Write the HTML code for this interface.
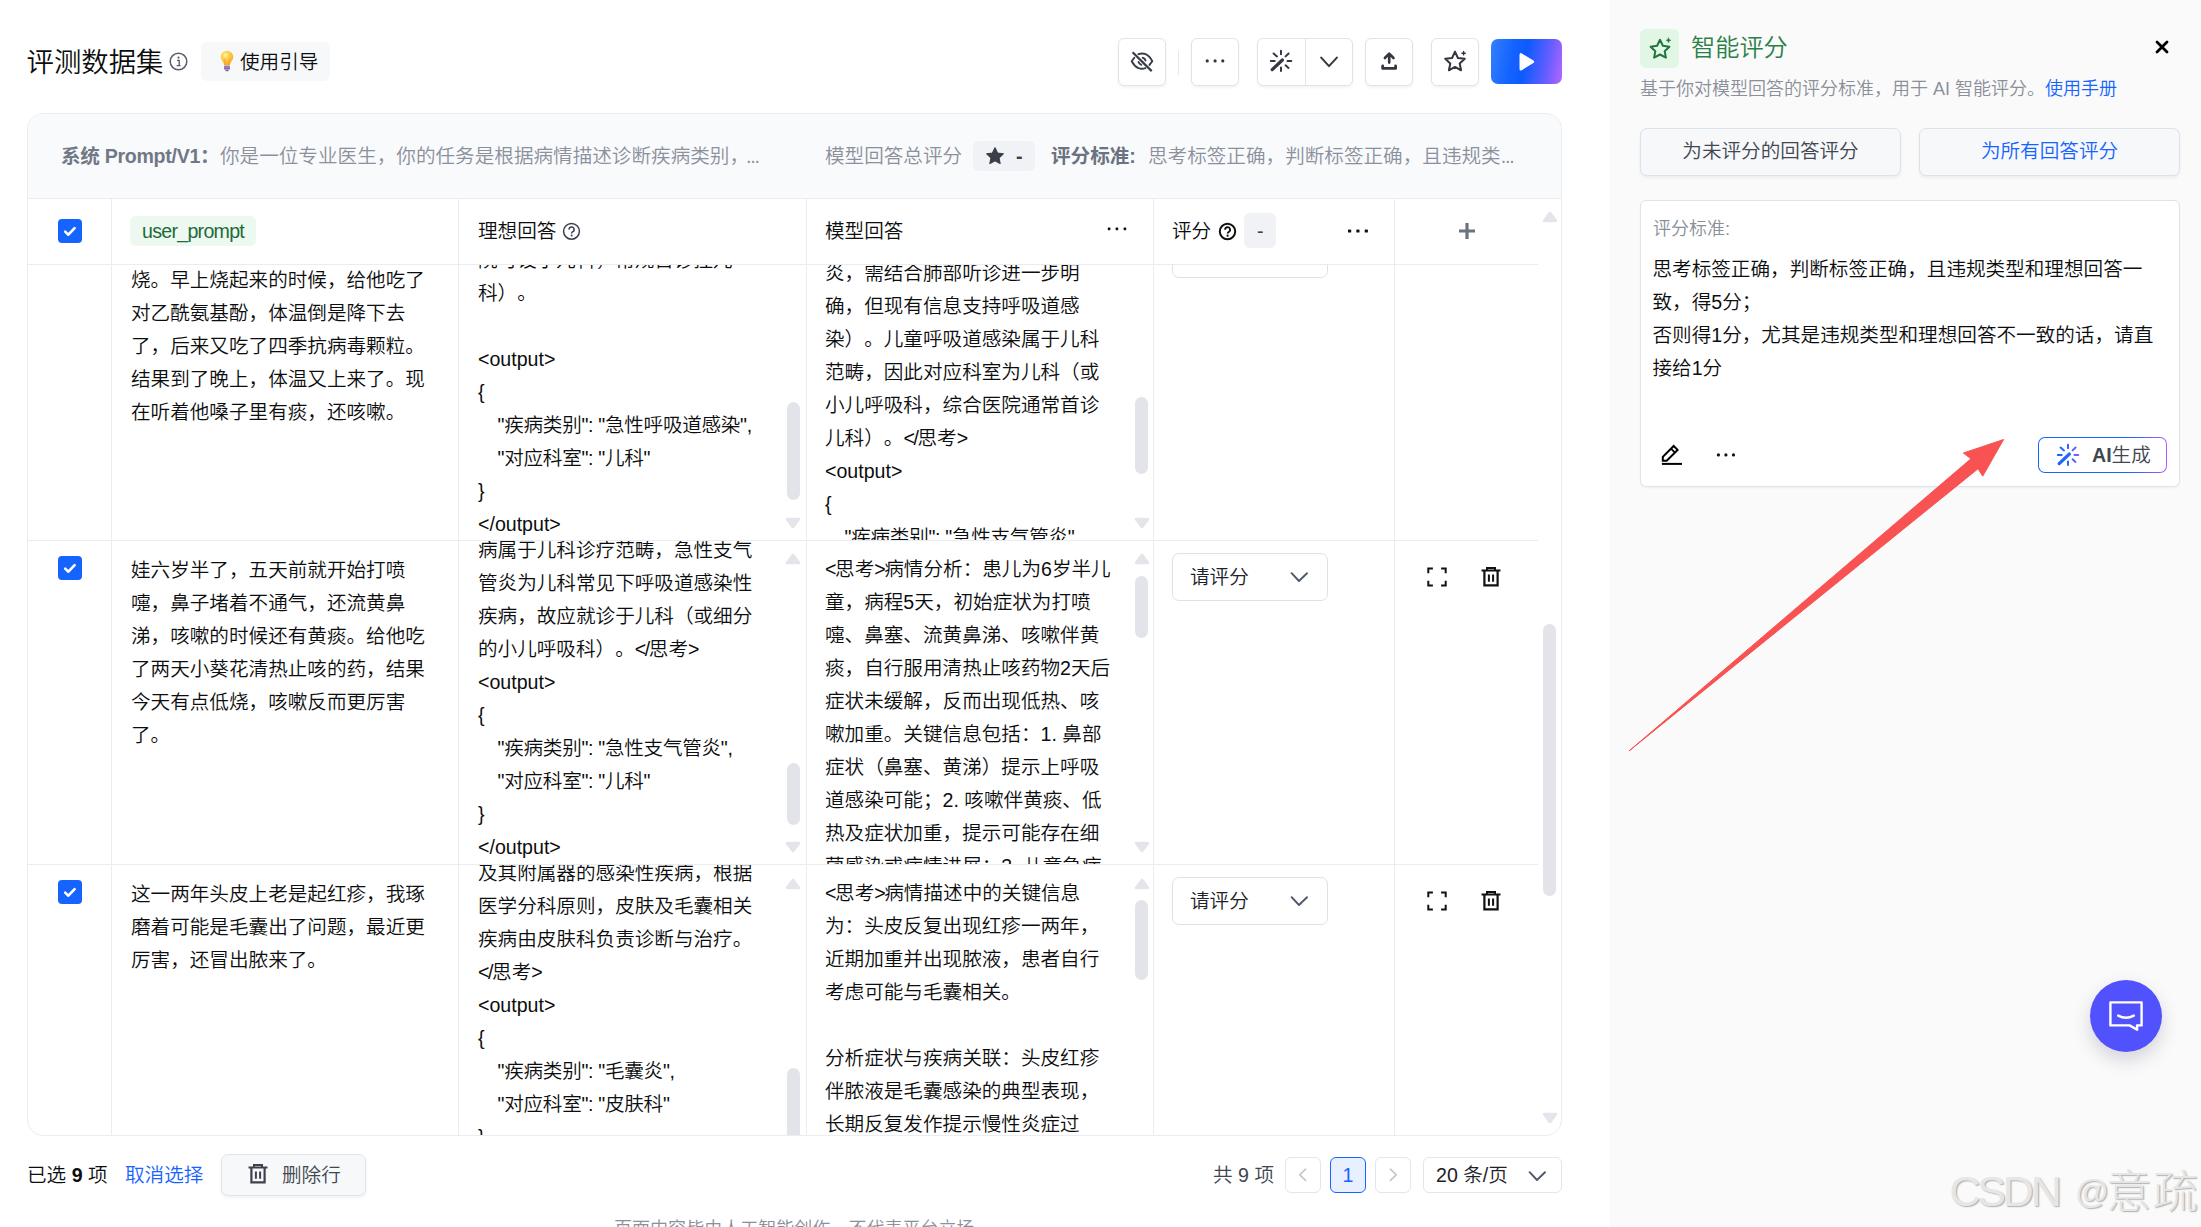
<!DOCTYPE html>
<html lang="zh-CN">
<head>
<meta charset="utf-8">
<title>评测数据集</title>
<style>
*{box-sizing:border-box;margin:0;padding:0}
html,body{width:2201px;height:1227px;overflow:hidden;background:#fff}
body{font-weight:350;text-spacing-trim:space-all;font-family:"Liberation Sans","Noto Sans CJK SC",sans-serif;color:#0c0d0e;font-size:19.6px;line-height:33px}
#app{position:relative;width:2201px;height:1227px;overflow:hidden;background:#fff}
b{font-weight:700}
.ab{letter-spacing:-1.4px}
.abs{position:absolute}
.t{margin-top:.7px;position:absolute;white-space:pre;line-height:33px;font-size:19.6px;color:#0c0d0e}
svg{display:block;position:absolute;overflow:visible}
/* top toolbar */
.tb{position:absolute;top:38px;width:48px;height:48px;border:1px solid #dfe3ea;border-radius:6px;background:#fff;box-shadow:0 2px 3px rgba(20,30,60,.05)}
/* table */
#card{position:absolute;left:27px;top:113px;width:1535px;height:1023px;border:1px solid #eaecf1;border-radius:16px;overflow:hidden;background:#fff}
#card .top{position:absolute;left:0;top:0;width:100%;height:85px;background:#f9fafc;border-bottom:1px solid #eaecf1}
.vl{position:absolute;top:85px;bottom:0;width:1px;background:#eaecf3}
.hl{position:absolute;left:0;width:1511px;height:1px;background:#eaecf3}
.cell{position:absolute;overflow:hidden}
.cb{position:absolute;width:24px;height:24px;border-radius:4px;background:#1664ff}
.sel{position:absolute;width:156px;height:48px;border:1px solid #dde2e9;border-radius:7px;background:#fff}
.thumb{position:absolute;width:13px;border-radius:7px;background:#e3e4ea}
.arr{position:absolute;width:0;height:0;border-left:7px solid transparent;border-right:7px solid transparent}
.arr.up{border-bottom:10px solid #e3e4ea}
.arr.dn{border-top:10px solid #e3e4ea}
/* right panel */
#side{position:absolute;left:1610px;top:0;width:591px;height:1227px;background:#fafafa}
.sbtn{position:absolute;top:128px;width:261px;height:48px;border:1px solid #dce1ea;border-radius:7px;background:#f7f8fa;box-shadow:0 2px 3px rgba(20,30,60,.06);text-align:center;line-height:45px;font-size:19.6px}
</style>
</head>
<body>
<div id="app">

<!-- ===== header ===== -->
<div class="t" id="title" style="margin-top:0;left:26.5px;top:43px;font-size:27.4px;line-height:40px;color:#0c0d0e">评测数据集</div>
<svg id="info" style="left:169px;top:52px" width="19" height="19" viewBox="0 0 19 19"><circle cx="9.5" cy="9.5" r="8.3" fill="none" stroke="#5a5f6b" stroke-width="1.5"/><circle cx="9.5" cy="5.6" r="1.1" fill="#5a5f6b"/><path d="M8 8.4h2.2v5M7.6 13.6h4" fill="none" stroke="#5a5f6b" stroke-width="1.4"/></svg>
<div class="abs" id="guide" style="left:201px;top:42px;width:129px;height:39px;border-radius:6px;background:#f7f8fa"></div>
<div class="t" style="left:240px;top:45px">使用引导</div>

<!-- toolbar buttons -->
<div class="tb" style="left:1118px"></div>
<div class="abs" style="left:1178px;top:51px;width:1px;height:24px;background:#e6e8ed"></div>
<div class="tb" style="left:1191px"></div>
<div class="tb" style="left:1257px;width:96px"></div>
<div class="abs" style="left:1305px;top:39px;width:1px;height:46px;background:#e1e4ea"></div>
<div class="tb" style="left:1365px"></div>
<div class="tb" style="left:1431px"></div>
<div class="abs" id="play" style="left:1491px;top:39px;width:71px;height:45px;border-radius:7px;background:linear-gradient(100deg,#3380ff 0%,#1463ff 30%,#0d5bff 48%,#5f5dff 76%,#b566ff 100%)"></div>


<!-- toolbar icons -->
<svg style="left:1118px;top:38px" width="48" height="48" viewBox="0 -0.400 48 48" fill="none" stroke="#383c46" stroke-width="1.900" stroke-linecap="round" stroke-linejoin="round"><path d="M20.400 15.800Q24 14.600 27.600 15.700Q31.600 17.500 34.300 22.800L31.500 26.500"/><path d="M16.300 19.300L13.700 22.800Q16.500 28 20.400 29.800Q24 31 27.400 29.800"/><path d="M24.700 19.300A3.600 3.600 0 0 1 27.500 22.100M20.500 23.500A3.600 3.600 0 0 0 23.300 26.300" stroke-width="1.900"/><path d="M14.600 13.900L33.700 32.700" stroke-linecap="butt" stroke-width="2.200"/></svg>
<svg style="left:1203px;top:56px" width="24" height="10" viewBox="0 0 24 10"><circle cx="4.200" cy="4.900" r="1.600" fill="#33373f"/><circle cx="12.100" cy="4.900" r="1.600" fill="#33373f"/><circle cx="19.800" cy="4.900" r="1.600" fill="#33373f"/></svg>
<svg style="left:1269px;top:49px" width="24" height="24" viewBox="0 0 24 24" fill="none" stroke="#33373f" stroke-width="2" stroke-linecap="round"><path d="M12 1.800v3.400M12 18.600v3.400M1.800 12h3.900M18.500 12h3.800M4.600 4.500l3.400 2.900M16.600 7.400l3-2.900M16.600 16.300l2.900 2.600"/><path d="M3.200 20.600L13.400 11" stroke-width="3.200"/></svg>
<svg style="left:1317px;top:49px" width="24" height="24" viewBox="0 0 24 24" fill="none" stroke="#33373f" stroke-width="2" stroke-linecap="round" stroke-linejoin="round"><path d="M4.200 8.600L12 17.100l7.900-8.500"/></svg>
<svg style="left:1377px;top:49px" width="24" height="24" viewBox="0 0 24 24" fill="none" stroke="#33373f" stroke-width="2.600" stroke-linecap="round" stroke-linejoin="round"><path d="M12.200 13.600V5.200M7.900 9l4.300-4.300 4.300 4.300"/><path d="M5.700 17v2.400h12.900v-2.400" stroke-width="2.800"/></svg>
<svg style="left:1443px;top:49px" width="24" height="24" viewBox="0 0 24 24" fill="none" stroke="#33373f" stroke-width="2" stroke-linejoin="round" stroke-linecap="round"><path d="M12 2.600l2.900 6.400 6.900.8-5.100 4.700 1.400 6.800L12 17.900l-6.100 3.400 1.400-6.800-5.100-4.700 6.900-.8z"/><path d="M20.600 2.500v3.400M18.900 4.200h3.400" stroke-width="1.400"/></svg>
<svg style="left:1515px;top:49px" width="24" height="24" viewBox="0 0 24 24"><path d="M6 5.700v14.200l11.600-7.100z" fill="#fff" stroke="#fff" stroke-width="3" stroke-linejoin="round"/></svg>
<!-- bulb -->
<svg style="left:220px;top:50px" width="14" height="22" viewBox="0 0 14 22"><defs><radialGradient id="bg1" cx=".38" cy=".3" r=".75"><stop offset="0" stop-color="#fff3b0"/><stop offset=".35" stop-color="#ffd34d"/><stop offset="1" stop-color="#fca41c"/></radialGradient></defs><path d="M7 1.100c3.500 0 6.200 2.600 6.200 5.900 0 2.200-1.200 3.600-2.100 4.900-.7 1-1.100 1.900-1.100 3.300H4c0-1.400-.4-2.300-1.100-3.300C2 10.600.8 9.200.8 7c0-3.300 2.700-5.900 6.200-5.900z" fill="url(#bg1)"/><path d="M5.200 14.800V11l-1.100-2.400M8.800 14.800V11l1.100-2.400" fill="none" stroke="#f59a23" stroke-width=".9"/><rect x="4" y="15.400" width="6" height="4.300" rx="1" fill="#a58ac4"/><path d="M4 17h6M4 18.500h6" stroke="#7d62a3" stroke-width=".7"/><rect x="5.300" y="19.700" width="3.400" height="1.500" rx=".7" fill="#7d62a3"/></svg>

<!-- ===== table card ===== -->
<div id="card">
  <div class="top"></div>
</div>


<!-- top info strip -->
<div class="t" style="left:61px;top:139px;color:#8a909c"><b style="color:#717885;letter-spacing:-.3px">系统 Prompt/V1：</b><span style="position:absolute;left:159px;top:0">你是一位专业医生，你的任务是根据病情描述诊断疾病类别，<span style="letter-spacing:-1.2px;margin-left:-3px">...</span></span></div>
<div class="t" style="left:825px;top:139px;color:#8a909c">模型回答总评分</div>
<div class="abs" style="left:973px;top:141px;width:62px;height:30px;border-radius:6px;background:#f1f2f5"></div>
<svg style="left:985px;top:146px" width="20" height="20" viewBox="0 0 20 20"><path d="M10 1.8l2.5 5.3 5.8.7-4.3 4 1.1 5.7L10 14.7l-5.1 2.8L6 11.8l-4.3-4 5.8-.7z" fill="#3a3f4a" stroke="#3a3f4a" stroke-width="1.2" stroke-linejoin="round"/></svg>
<div class="t" style="left:1016px;top:139px;font-weight:bold;color:#3a3f4a">-</div>
<div class="t" style="left:1051px;top:139px;color:#8a909c"><b style="color:#6b7280">评分标准:</b><span style="position:absolute;left:97px;top:0">思考标签正确，判断标签正确，且违规类<span style="letter-spacing:-1.2px">...</span></span></div>

<!-- grid lines -->
<div class="abs" style="left:111px;top:199px;width:1px;height:937px;background:#eaecf3"></div>
<div class="abs" style="left:458px;top:199px;width:1px;height:937px;background:#eaecf3"></div>
<div class="abs" style="left:806px;top:199px;width:1px;height:937px;background:#eaecf3"></div>
<div class="abs" style="left:1153px;top:199px;width:1px;height:937px;background:#eaecf3"></div>
<div class="abs" style="left:1394px;top:199px;width:1px;height:937px;background:#eaecf3"></div>
<div class="abs" style="left:28px;top:264px;width:1510px;height:1px;background:#eaecf3"></div>
<div class="abs" style="left:28px;top:540px;width:1510px;height:1px;background:#eaecf3"></div>
<div class="abs" style="left:28px;top:864px;width:1510px;height:1px;background:#eaecf3"></div>

<!-- header row -->
<div class="cb" style="left:58px;top:219px"></div>
<svg style="left:58px;top:219px" width="24" height="24" viewBox="0 0 24 24"><path d="M7.2 12.6l3.2 3.1 6.2-6.6" fill="none" stroke="#fff" stroke-width="2.6" stroke-linecap="round" stroke-linejoin="round"/></svg>
<div class="abs" style="left:130px;top:216px;width:126px;height:30px;border-radius:6px;background:#edf8f0"></div>
<div class="t" id="uptag" style="left:142px;top:214.5px;color:#1c6b3a;letter-spacing:-.72px">user_prompt</div>
<div class="t" style="left:478px;top:214.5px">理想回答</div>
<svg style="left:562px;top:222px" width="19" height="19" viewBox="0 0 19 19"><circle cx="9.5" cy="9.3" r="7.9" fill="none" stroke="#3a3f4a" stroke-width="1.5"/><path d="M7.1 7.6a2.5 2.5 0 1 1 3.7 2.1c-.8.5-1.2.9-1.2 1.8" fill="none" stroke="#3a3f4a" stroke-width="1.5"/><circle cx="9.6" cy="13.6" r="1" fill="#3a3f4a"/></svg>
<div class="t" style="left:825px;top:214.5px">模型回答</div>
<svg style="left:1105px;top:225px" width="24" height="8" viewBox="0 0 24 8"><rect x="2.8" y="2.6" width="2.6" height="2.6" rx=".6" fill="#111"/><rect x="10.6" y="2.6" width="2.6" height="2.6" rx=".6" fill="#111"/><rect x="18.6" y="2.6" width="2.6" height="2.6" rx=".6" fill="#111"/></svg>
<div class="t" style="left:1172px;top:214.5px">评分</div>
<svg style="left:1218px;top:221.7px" width="19" height="19" viewBox="0 0 19 19"><circle cx="9.5" cy="9.5" r="7.7" fill="none" stroke="#111" stroke-width="2"/><path d="M7.1 7.8a2.5 2.5 0 1 1 3.7 2.1c-.8.5-1.2.9-1.2 1.7" fill="none" stroke="#111" stroke-width="1.8"/><circle cx="9.6" cy="13.7" r="1.1" fill="#111"/></svg>
<div class="abs" style="left:1244px;top:213px;width:32px;height:35px;border-radius:6px;background:#f1f2f5"></div>
<div class="t" style="left:1257px;top:214.5px;color:#3a3f4a">-</div>
<svg style="left:1346px;top:227px" width="24" height="8" viewBox="0 0 24 8"><rect x="2" y="2.4" width="3.2" height="3.2" rx=".7" fill="#111"/><rect x="10.3" y="2.4" width="3.2" height="3.2" rx=".7" fill="#111"/><rect x="18.7" y="2.4" width="3.2" height="3.2" rx=".7" fill="#111"/></svg>
<svg style="left:1458px;top:222px" width="18" height="18" viewBox="0 0 18 18"><path d="M9 1v16M1 9h16" stroke="#6b7280" stroke-width="3.2" fill="none"/></svg>

<!-- row 1 -->
<div class="cell" style="left:112px;top:265px;width:346px;height:275px"><div class="t" style="left:19px;top:-1.5px">烧。早上烧起来的时候，给他吃了
对乙酰氨基酚，体温倒是降下去
了，后来又吃了四季抗病毒颗粒。
结果到了晚上，体温又上来了。现
在听着他嗓子里有痰，还咳嗽。</div></div>
<div class="cell" style="left:459px;top:265px;width:347px;height:275px"><div class="t" style="left:19px;top:-21.5px">院可设小儿科，常规首诊挂儿
科）。

&lt;output&gt;
{
<span style="margin-left:19.6px;letter-spacing:-.3px">"疾病类别": "急性呼吸道感染",</span>
<span style="margin-left:19.6px;letter-spacing:-.3px">"对应科室": "儿科"</span>
}
&lt;/output&gt;</div></div>
<div class="cell" style="left:807px;top:265px;width:346px;height:275px"><div class="t" style="left:18px;top:-8.5px">炎，需结合肺部听诊进一步明
确，但现有信息支持呼吸道感
染）。儿童呼吸道感染属于儿科
范畴，因此对应科室为儿科（或
小儿呼吸科，综合医院通常首诊
儿科）。<span class="ab">&lt;/</span>思考<span class="ab">&gt;</span>
&lt;output&gt;
{
<span style="margin-left:19.6px;letter-spacing:-.3px">"疾病类别": "急性支气管炎",</span></div></div>
<!-- row 2 -->
<div class="cell" style="left:112px;top:541px;width:346px;height:323px"><div class="t" style="left:19px;top:12.5px">娃六岁半了，五天前就开始打喷
嚏，鼻子堵着不通气，还流黄鼻
涕，咳嗽的时候还有黄痰。给他吃
了两天小葵花清热止咳的药，结果
今天有点低烧，咳嗽反而更厉害
了。</div></div>
<div class="cell" style="left:459px;top:541px;width:347px;height:323px"><div class="t" style="left:19px;top:-7.5px">病属于儿科诊疗范畴，急性支气
管炎为儿科常见下呼吸道感染性
疾病，故应就诊于儿科（或细分
的小儿呼吸科）。<span class="ab">&lt;/</span>思考<span class="ab">&gt;</span>
&lt;output&gt;
{
<span style="margin-left:19.6px;letter-spacing:-.3px">"疾病类别": "急性支气管炎",</span>
<span style="margin-left:19.6px;letter-spacing:-.3px">"对应科室": "儿科"</span>
}
&lt;/output&gt;</div></div>
<div class="cell" style="left:807px;top:541px;width:346px;height:323px"><div class="t" style="left:18px;top:11.5px"><span class="ab">&lt;</span>思考<span class="ab">&gt;</span>病情分析：患儿为6岁半儿
童，病程5天，初始症状为打喷
嚏、鼻塞、流黄鼻涕、咳嗽伴黄
痰，自行服用清热止咳药物2天后
症状未缓解，反而出现低热、咳
嗽加重。关键信息包括：1. 鼻部
症状（鼻塞、黄涕）提示上呼吸
道感染可能；2. 咳嗽伴黄痰、低
热及症状加重，提示可能存在细
菌感染或病情进展；3. 儿童急症</div></div>
<!-- row 3 -->
<div class="cell" style="left:112px;top:865px;width:346px;height:270px"><div class="t" style="left:19px;top:12.5px">这一两年头皮上老是起红疹，我琢
磨着可能是毛囊出了问题，最近更
厉害，还冒出脓来了。</div></div>
<div class="cell" style="left:459px;top:865px;width:347px;height:270px"><div class="t" style="left:19px;top:-8.5px">及其附属器的感染性疾病，根据
医学分科原则，皮肤及毛囊相关
疾病由皮肤科负责诊断与治疗。
<span class="ab">&lt;/</span>思考<span class="ab">&gt;</span>
&lt;output&gt;
{
<span style="margin-left:19.6px;letter-spacing:-.3px">"疾病类别": "毛囊炎",</span>
<span style="margin-left:19.6px;letter-spacing:-.3px">"对应科室": "皮肤科"</span>
}</div></div>
<div class="cell" style="left:807px;top:865px;width:346px;height:270px"><div class="t" style="left:18px;top:11.5px"><span class="ab">&lt;</span>思考<span class="ab">&gt;</span>病情描述中的关键信息
为：头皮反复出现红疹一两年，
近期加重并出现脓液，患者自行
考虑可能与毛囊相关。

分析症状与疾病关联：头皮红疹
伴脓液是毛囊感染的典型表现，
长期反复发作提示慢性炎症过</div></div>
<div class="abs" style="left:1172px;top:230px;width:156px;height:48px;border:1px solid #dde2e9;border-radius:7px;clip-path:inset(35px 0 0 0)"></div>
<div class="thumb" style="left:786.900px;top:402px;height:98px"></div>
<svg style="left:785.400px;top:517px" width="16" height="12" viewBox="0 0 16 12"><path d="M8 9.800L2.200 2.200h11.600z" fill="#e4e5eb" stroke="#e4e5eb" stroke-width="3" stroke-linejoin="round"/></svg>
<div class="thumb" style="left:1135.0px;top:397px;height:77px"></div>
<svg style="left:1133.5px;top:517px" width="16" height="12" viewBox="0 0 16 12"><path d="M8 9.800L2.200 2.200h11.600z" fill="#e4e5eb" stroke="#e4e5eb" stroke-width="3" stroke-linejoin="round"/></svg>
<div class="cb" style="left:58px;top:556px"></div>
<svg style="left:58px;top:556px" width="24" height="24" viewBox="0 0 24 24"><path d="M7.200 12.600l3.200 3.100 6.200-6.600" fill="none" stroke="#fff" stroke-width="2.600" stroke-linecap="round" stroke-linejoin="round"/></svg>
<div class="sel" style="left:1172px;top:553px"></div>
<div class="t" style="left:1190px;top:560px;color:#1d2129">请评分</div>
<svg style="left:1289px;top:567px" width="20" height="20" viewBox="0 0 20 20"><path d="M2.600 6.200l7.400 7.800 8-7.800" fill="none" stroke="#4e5969" stroke-width="1.900" stroke-linecap="round" stroke-linejoin="round"/></svg>
<svg style="left:1427px;top:567px" width="20" height="20" viewBox="0 0 20 20" fill="none" stroke="#111" stroke-width="2"><path d="M1.300 6.200V1.600h4.600M14.100 1.600h4.600v4.600M18.700 13.800v4.600h-4.600M5.900 18.400H1.300v-4.600"/></svg>
<svg style="left:1481px;top:567px" width="20" height="20" viewBox="0 0 20 20" fill="none" stroke="#111" stroke-width="2.200"><path d="M0.500 3.400h19M6 2.600V1.100h8v1.500" stroke-width="2"/><path d="M3.400 3.600v14.800h13.200V3.600"/><path d="M7.900 7.600v7.200M12.100 7.600v7.200" stroke-width="2"/></svg>
<svg style="left:785.400px;top:553px" width="16" height="12" viewBox="0 0 16 12"><path d="M8 2.200L2.200 9.800h11.600z" fill="#e4e5eb" stroke="#e4e5eb" stroke-width="3" stroke-linejoin="round"/></svg>
<div class="thumb" style="left:786.900px;top:763px;height:62px"></div>
<svg style="left:785.400px;top:841px" width="16" height="12" viewBox="0 0 16 12"><path d="M8 9.800L2.200 2.200h11.600z" fill="#e4e5eb" stroke="#e4e5eb" stroke-width="3" stroke-linejoin="round"/></svg>
<svg style="left:1133.5px;top:553px" width="16" height="12" viewBox="0 0 16 12"><path d="M8 2.200L2.200 9.800h11.600z" fill="#e4e5eb" stroke="#e4e5eb" stroke-width="3" stroke-linejoin="round"/></svg>
<div class="thumb" style="left:1135.0px;top:576px;height:62px"></div>
<svg style="left:1133.5px;top:841px" width="16" height="12" viewBox="0 0 16 12"><path d="M8 9.800L2.200 2.200h11.600z" fill="#e4e5eb" stroke="#e4e5eb" stroke-width="3" stroke-linejoin="round"/></svg>
<div class="cb" style="left:58px;top:880px"></div>
<svg style="left:58px;top:880px" width="24" height="24" viewBox="0 0 24 24"><path d="M7.200 12.600l3.200 3.100 6.200-6.600" fill="none" stroke="#fff" stroke-width="2.600" stroke-linecap="round" stroke-linejoin="round"/></svg>
<div class="sel" style="left:1172px;top:877px"></div>
<div class="t" style="left:1190px;top:884px;color:#1d2129">请评分</div>
<svg style="left:1289px;top:891px" width="20" height="20" viewBox="0 0 20 20"><path d="M2.600 6.200l7.400 7.800 8-7.800" fill="none" stroke="#4e5969" stroke-width="1.900" stroke-linecap="round" stroke-linejoin="round"/></svg>
<svg style="left:1427px;top:891px" width="20" height="20" viewBox="0 0 20 20" fill="none" stroke="#111" stroke-width="2"><path d="M1.300 6.200V1.600h4.600M14.100 1.600h4.600v4.600M18.700 13.800v4.600h-4.600M5.900 18.400H1.300v-4.600"/></svg>
<svg style="left:1481px;top:891px" width="20" height="20" viewBox="0 0 20 20" fill="none" stroke="#111" stroke-width="2.200"><path d="M0.500 3.400h19M6 2.600V1.100h8v1.500" stroke-width="2"/><path d="M3.400 3.600v14.800h13.200V3.600"/><path d="M7.900 7.600v7.200M12.100 7.600v7.200" stroke-width="2"/></svg>
<svg style="left:785.400px;top:877.600px" width="16" height="12" viewBox="0 0 16 12"><path d="M8 2.200L2.200 9.800h11.600z" fill="#e4e5eb" stroke="#e4e5eb" stroke-width="3" stroke-linejoin="round"/></svg>
<div class="thumb" style="left:786.900px;top:1068px;height:67px;border-radius:7px 7px 0 0"></div>
<svg style="left:1133.5px;top:877.600px" width="16" height="12" viewBox="0 0 16 12"><path d="M8 2.200L2.200 9.800h11.600z" fill="#e4e5eb" stroke="#e4e5eb" stroke-width="3" stroke-linejoin="round"/></svg>
<div class="thumb" style="left:1135.0px;top:900px;height:80px"></div>
<svg style="left:1541.5px;top:211px" width="16" height="12" viewBox="0 0 16 12"><path d="M8 2.200L2.200 9.800h11.600z" fill="#e4e5eb" stroke="#e4e5eb" stroke-width="3" stroke-linejoin="round"/></svg>
<div class="thumb" style="left:1543.0px;top:624px;height:272px"></div>
<svg style="left:1541.5px;top:1112px" width="16" height="12" viewBox="0 0 16 12"><path d="M8 9.800L2.200 2.200h11.600z" fill="#e4e5eb" stroke="#e4e5eb" stroke-width="3" stroke-linejoin="round"/></svg>


<!-- ===== footer ===== -->
<div id="footer">
<div class="t" style="left:27px;top:1158px">已选 <b>9</b> 项</div>
<div class="t" style="left:125px;top:1158px;color:#1664ff">取消选择</div>
<div class="abs" style="left:221px;top:1154px;width:145px;height:42px;border:1px solid #e1e4ea;border-radius:7px;background:#f7f8fa;box-shadow:0 2px 3px rgba(20,30,60,.06)"></div>
<svg style="left:248px;top:1164px" width="20" height="20" viewBox="0 0 20 20" fill="none" stroke="#3d424c" stroke-width="2.200"><path d="M0.500 3.400h19M6 2.600V1.100h8v1.500" stroke-width="2"/><path d="M3.400 3.600v14.800h13.200V3.600"/><path d="M7.900 7.600v7.200M12.100 7.600v7.200" stroke-width="2"/></svg>
<div class="t" style="left:282px;top:1158px;color:#41464f">删除行</div>
<div class="t" style="left:1213px;top:1158px;color:#41464f">共 9 项</div>
<div class="abs" style="left:1285px;top:1157px;width:36px;height:36px;border:1px solid #e3e6ed;border-radius:6px;background:#fff"></div>
<svg style="left:1295px;top:1165px" width="16" height="20" viewBox="0 0 16 20"><path d="M10.600 4.200L4.800 9.800l5.800 5.600" fill="none" stroke="#c3c7cf" stroke-width="1.700" stroke-linecap="round" stroke-linejoin="round"/></svg>
<div class="abs" style="left:1330px;top:1157px;width:36px;height:36px;border:1.500px solid #1664ff;border-radius:6px;background:#e8efff"></div>
<div class="t" style="left:1330px;top:1158px;width:36px;text-align:center;color:#1664ff">1</div>
<div class="abs" style="left:1375px;top:1157px;width:36px;height:36px;border:1px solid #e3e6ed;border-radius:6px;background:#fff"></div>
<svg style="left:1385px;top:1165px" width="16" height="20" viewBox="0 0 16 20"><path d="M5.400 4.200l5.800 5.600-5.800 5.600" fill="none" stroke="#c3c7cf" stroke-width="1.700" stroke-linecap="round" stroke-linejoin="round"/></svg>
<div class="abs" style="left:1423px;top:1157px;width:139px;height:36px;border:1px solid #e3e6ed;border-radius:6px;background:#fff"></div>
<div class="t" style="left:1436px;top:1158px;color:#1d2129">20 条/页</div>
<svg style="left:1527px;top:1166px" width="20" height="20" viewBox="0 0 20 20"><path d="M2.600 6.200l7.400 7.800 8-7.800" fill="none" stroke="#4e5969" stroke-width="1.900" stroke-linecap="round" stroke-linejoin="round"/></svg>
<div class="t" style="left:614px;top:1212.500px;font-size:18.050px;color:#8a909c">页面内容皆由人工智能创作，不代表平台立场</div>
</div>

<!-- ===== right panel ===== -->
<div id="side"></div>
<div class="abs" style="left:1640px;top:29px;width:39px;height:39px;border-radius:6px;background:#e2f6e6"></div>
<svg style="left:1647.800px;top:36.900px" width="24" height="24" viewBox="0 0 24 24" fill="none" stroke="#23753f" stroke-width="2" stroke-linejoin="round" stroke-linecap="round"><path d="M12 2.800l2.900 6 6.500.85-4.750 4.500 1.250 6.500L12 17.500l-5.900 3.150 1.250-6.500L2.600 9.650l6.500-.85z"/><path d="M20.500 0.900l.7 1.700 1.700.7-1.700.7-.7 1.700-.7-1.700-1.700-.7 1.700-.7z" fill="#23753f" stroke-width=".5"/></svg>
<div class="t" style="margin-top:0;left:1691px;top:28px;font-size:24.200px;line-height:40px;color:#2a8148">智能评分</div>
<svg style="left:2155px;top:40px" width="14" height="14" viewBox="0 0 14 14"><path d="M2 2l10 10M12 2L2 12" stroke="#000" stroke-width="2.800" stroke-linecap="round"/></svg>
<div class="t" style="margin-top:0;left:1640px;top:73.400px;font-size:18px;color:#8a8f99">基于你对模型回答的评分标准，用于 AI 智能评分。<span style="color:#1664ff">使用手册</span></div>
<div class="sbtn" style="left:1640px;color:#41464f">为未评分的回答评分</div>
<div class="sbtn" style="left:1919px;color:#1664ff">为所有回答评分</div>
<div class="abs" style="left:1640px;top:200px;width:540px;height:287px;border:1px solid #dfe3ea;border-radius:6px;background:#fff;box-shadow:0 1px 2px rgba(20,30,60,.05)"></div>
<div class="t" style="left:1653px;top:212px;font-size:18px;color:#8a8f99">评分标准:</div>
<div class="t" style="margin-top:0;left:1652.5px;top:252.500px">思考标签正确，判断标签正确，且违规类型和理想回答一
致，得5分；
否则得1分，尤其是违规类型和理想回答不一致的话，请直
接给1分</div>
<svg style="left:1660px;top:443px" width="24" height="24" viewBox="0 0 24 24" fill="none" stroke="#000" stroke-width="2"><path d="M1.900 20.900H22"/><path d="M13.700 3l3.900 3.900L6.700 17.800H2.800v-3.900z" stroke-linejoin="miter"/><path d="M11 5.700l3.900 3.900" stroke-width="1.800"/></svg>
<svg style="left:1714px;top:450px" width="24" height="10" viewBox="0 0 24 10"><circle cx="4.400" cy="4.900" r="1.600" fill="#111"/><circle cx="11.900" cy="4.900" r="1.600" fill="#111"/><circle cx="19.500" cy="4.900" r="1.600" fill="#111"/></svg>
<div class="abs" style="left:2038px;top:437px;width:129px;height:36px;border-radius:7px;background:linear-gradient(90deg,#1664ff 0%,#1664ff 70%,#b05cf5 100%)"></div>
<div class="abs" style="left:2039.2px;top:438.2px;width:126.6px;height:33.6px;border-radius:5.800px;background:#fff"></div>
<svg style="left:2056px;top:443px" width="24" height="24" viewBox="0 0 24 24" fill="none" stroke-width="2" stroke-linecap="round"><defs><linearGradient id="wg" x1="0" y1="0" x2="24" y2="0" gradientUnits="userSpaceOnUse"><stop offset="0" stop-color="#1664ff"/><stop offset=".6" stop-color="#2b66ff"/><stop offset="1" stop-color="#9b5cf5"/></linearGradient></defs><g stroke="url(#wg)"><path d="M12 1.800v3.400M12 18.600v3.400M1.800 12.010h3.900M18.500 12.010h3.800M4.600 4.500l3.400 2.900M16.600 7.400l3-2.900M16.600 16.300l2.900 2.600"/><path d="M3.200 20.600L13.400 11" stroke-width="3.200"/></g></svg>
<div class="t" style="left:2092px;top:438px;color:#41464f"><b style="font-weight:bold">AI</b>生成</div>
<!-- red arrow -->
<svg style="left:0;top:0" width="2201" height="1227" viewBox="0 0 2201 1227"><path d="M1629 751L1970.900 458.800L1963.400 453L2003.600 439.500L1982.700 476.200L1978.100 468.700Z" fill="#f85252" stroke="#f85252" stroke-width="1" stroke-linejoin="round"/></svg>
<!-- chat fab -->
<div class="abs" style="left:2090px;top:980px;width:72px;height:72px;border-radius:50%;background:#5151fd;box-shadow:0 8px 18px rgba(40,40,80,.18)"></div>
<svg style="left:2108px;top:1000px" width="36" height="34" viewBox="0 0 36 34" fill="none" stroke="#fff" stroke-width="2.400" stroke-linejoin="round" stroke-linecap="round"><path d="M2.400 2.400h31.200v23H29l.2 4.400-7.600-4.400H2.400z"/><path d="M10.200 15.600c4.800 2.600 10.800 2.600 15.600 0"/></svg>
<!-- watermark -->
<div class="t" id="wm" style="margin-top:0;left:1940px;top:1150px;width:261px;height:77px;font-weight:300;color:#e6e6e6;text-shadow:1.2px 1.2px 1.2px #b0b0b0;line-height:60px"><span style="position:absolute;left:9.5px;top:10.5px;font-size:43px;letter-spacing:-3.2px">CSDN </span><span style="position:absolute;left:135px;top:11.5px;font-size:33.5px">@</span><span style="position:absolute;left:166px;top:12.5px;font-size:45.5px;letter-spacing:1px">意疏</span></div>


</div>
</body>
</html>
